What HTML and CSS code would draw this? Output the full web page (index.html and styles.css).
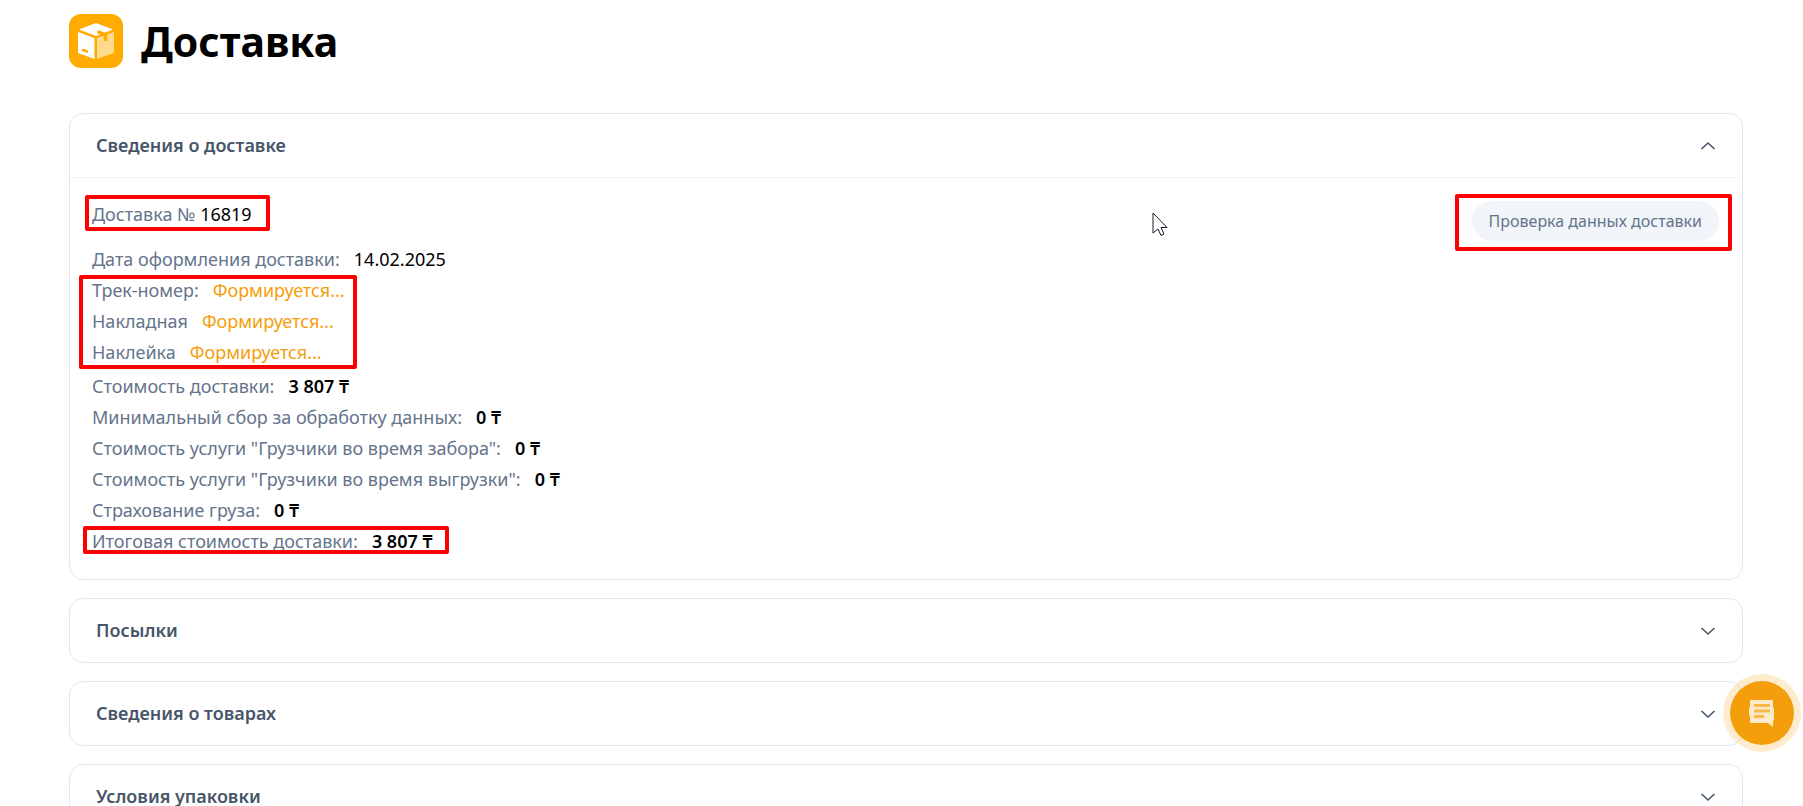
FILE: index.html
```
<!DOCTYPE html>
<html lang="ru">
<head>
    <meta charset="UTF-8">
    <meta name="viewport" content="width=device-width, initial-scale=1.0">
    <title>Доставка</title>
    <link rel="stylesheet" href="styles.css">
</head>
<body>
    <header class="page-header">
        <svg class="page-icon" viewBox="0 0 54 54" aria-hidden="true">
            <rect width="54" height="54" rx="12" fill="#ffab00"/>
            <path d="M10 15.500 27 9l17 6.500-17 6.500z" fill="#fff"/>
            <path d="M9 18 25.500 24V45L9 39z" fill="#fff"/>
            <path d="M28 24 45 18V39L28 45z" fill="#ffd98c"/>
            <path d="M28.500 17.500l8 3.500v6" fill="none" stroke="#ffab00" stroke-width="3.500"/>
            <path d="M14 36l4 1.500" stroke="#ffab00" stroke-width="2.500" stroke-linecap="round"/>
        </svg>
        <h1>Доставка</h1>
    </header>

    <main class="panels">
        <details class="panel panel-main" open>
            <summary>
                Сведения о доставке
                <svg class="chevron" viewBox="0 0 16 16" aria-hidden="true"><path d="M1.500 5 8 11l6.500-6"/></svg>
            </summary>
            <div class="panel-body">
                <div class="info">
                    <div class="row number mark mark-number"><span>Доставка № <b>16819</b></span></div>
                    <div class="group">
                        <div class="row">Дата оформления доставки: <b>14.02.2025</b></div>
                        <div class="mark mark-docs">
                            <div class="row">Трек-номер: <i>Формируется...</i></div>
                            <div class="row">Накладная <i>Формируется...</i></div>
                            <div class="row">Наклейка <i>Формируется...</i></div>
                        </div>
                    </div>
                    <div class="group">
                        <div class="row">Стоимость доставки: <strong>3 807 ₸</strong></div>
                        <div class="row">Минимальный сбор за обработку данных: <strong>0 ₸</strong></div>
                        <div class="row">Стоимость услуги "Грузчики во время забора": <strong>0 ₸</strong></div>
                        <div class="row">Стоимость услуги "Грузчики во время выгрузки": <strong>0 ₸</strong></div>
                        <div class="row">Страхование груза: <strong>0 ₸</strong></div>
                        <div class="row mark mark-total">Итоговая стоимость доставки: <strong>3 807 ₸</strong></div>
                    </div>
                </div>
                <div class="mark mark-status">
                    <button class="status" type="button">Проверка данных доставки</button>
                </div>
            </div>
        </details>

        <details class="panel">
            <summary>
                Посылки
                <svg class="chevron" viewBox="0 0 16 16" aria-hidden="true"><path d="M1.500 5 8 11l6.500-6"/></svg>
            </summary>
        </details>

        <details class="panel">
            <summary>
                Сведения о товарах
                <svg class="chevron" viewBox="0 0 16 16" aria-hidden="true"><path d="M1.500 5 8 11l6.500-6"/></svg>
            </summary>
        </details>

        <details class="panel">
            <summary>
                Условия упаковки
                <svg class="chevron" viewBox="0 0 16 16" aria-hidden="true"><path d="M1.500 5 8 11l6.500-6"/></svg>
            </summary>
        </details>
    </main>

    <button class="chat" type="button" aria-label="Чат">
        <svg viewBox="0 0 28 28" aria-hidden="true">
            <path d="M3 1h21q1 0 1 1v6l1 2v11l-1 1v6l-5-4H3q-1 0-1-1v-6l-1-1V9l1-1V2q0-1 1-1z" fill="#fdeacb"/>
            <path d="M6 6.500h16M6 12h16M6 17.500h10" stroke="#f8b84c" stroke-width="3"/>
        </svg>
    </button>

    <svg class="cursor" viewBox="0 0 16 25" aria-hidden="true">
        <path d="M1 1v20l5-4 3 6.500 3-1.500-3-6.500h6z" fill="#fff" stroke="#1c1c28"/>
    </svg>
</body>
</html>
```
FILE: styles.css
```
* {
    margin: 0;
    padding: 0;
    box-sizing: border-box;
}

body {
    font-family: "Noto Sans", "Open Sans", sans-serif;
    font-size: 18px;
    background: white;
    color: black;
    height: 100vh;
    padding: 14px 60px 0 69px;
    position: relative;
    overflow: hidden;
}

.page-header {
    display: flex;
    align-items: center;
    gap: 18px;
    height: 54px;
    margin-bottom: 45px;
}

.page-icon {
    width: 54px;
    height: 54px;
}

h1 {
    font-size: 41px;
    line-height: 56px;
    font-weight: bold;
}

.panels {
    display: flex;
    flex-direction: column;
    gap: 18px;
}

.panel {
    border: 1px solid #e2e8f0;
    border-radius: 14px;
}

.panel-main {
    border-color: #e5e7eb;
}

summary {
    display: flex;
    justify-content: space-between;
    align-items: center;
    padding: 18px 26px;
    line-height: 27px;
    font-weight: 600;
    color: #475569;
    cursor: pointer;
    list-style: none;
}

.chevron {
    width: 16px;
    height: 16px;
    fill: none;
    stroke: #475569;
    stroke-width: 1.6;
}

.panel[open] .chevron {
    transform: rotate(180deg);
}

.panel-body {
    display: flex;
    justify-content: space-between;
    align-items: flex-start;
    padding: 21px 23px 22px 22px;
    border-top: 1px solid #f1f5f9;
}

.info {
    display: flex;
    flex-direction: column;
    align-items: flex-start;
    gap: 3px;
    color: #64748b;
}

.group {
    display: flex;
    flex-direction: column;
    align-items: flex-start;
}

.row {
    display: flex;
    gap: 14px;
    line-height: 31px;
}

.row b {
    font-weight: normal;
    color: black;
}

.row i {
    font-style: normal;
    color: #f59e0b;
}

.row strong {
    font-weight: 600;
    color: black;
}

.number {
    margin-bottom: 11px;
}

.status {
    height: 40px;
    margin-top: 2px;
    padding: 0 17px;
    border: none;
    border-radius: 20px;
    background: #f1f5f9;
    color: #64748b;
    font-family: inherit;
    font-size: 16px;
    cursor: pointer;
}

/* Красные рамки вокруг важных данных */
.mark {
    position: relative;
}

.mark::after {
    content: "";
    position: absolute;
    border: 4px solid red;
    border-radius: 2px;
    pointer-events: none;
}

.mark-number::after {
    inset: -4px -18px -1px -7px;
}

.mark-docs::after {
    inset: 0 -12px -1px -13px;
}

.mark-total::after {
    inset: 0 -16px 3px -9px;
}

.mark-status::after {
    inset: -5px -13px -10px -17px;
}

/* Кнопка чата */
.chat {
    position: fixed;
    right: 2px;
    bottom: 54px;
    width: 78px;
    height: 78px;
    display: flex;
    justify-content: center;
    align-items: center;
    border: 7px solid rgba(245, 158, 11, 0.2);
    border-radius: 50%;
    background: #f59e0b;
    background-clip: padding-box;
    cursor: pointer;
}

.chat svg {
    width: 28px;
    height: 28px;
}

.cursor {
    position: absolute;
    left: 1152px;
    top: 212px;
    width: 16px;
    height: 25px;
}
```
